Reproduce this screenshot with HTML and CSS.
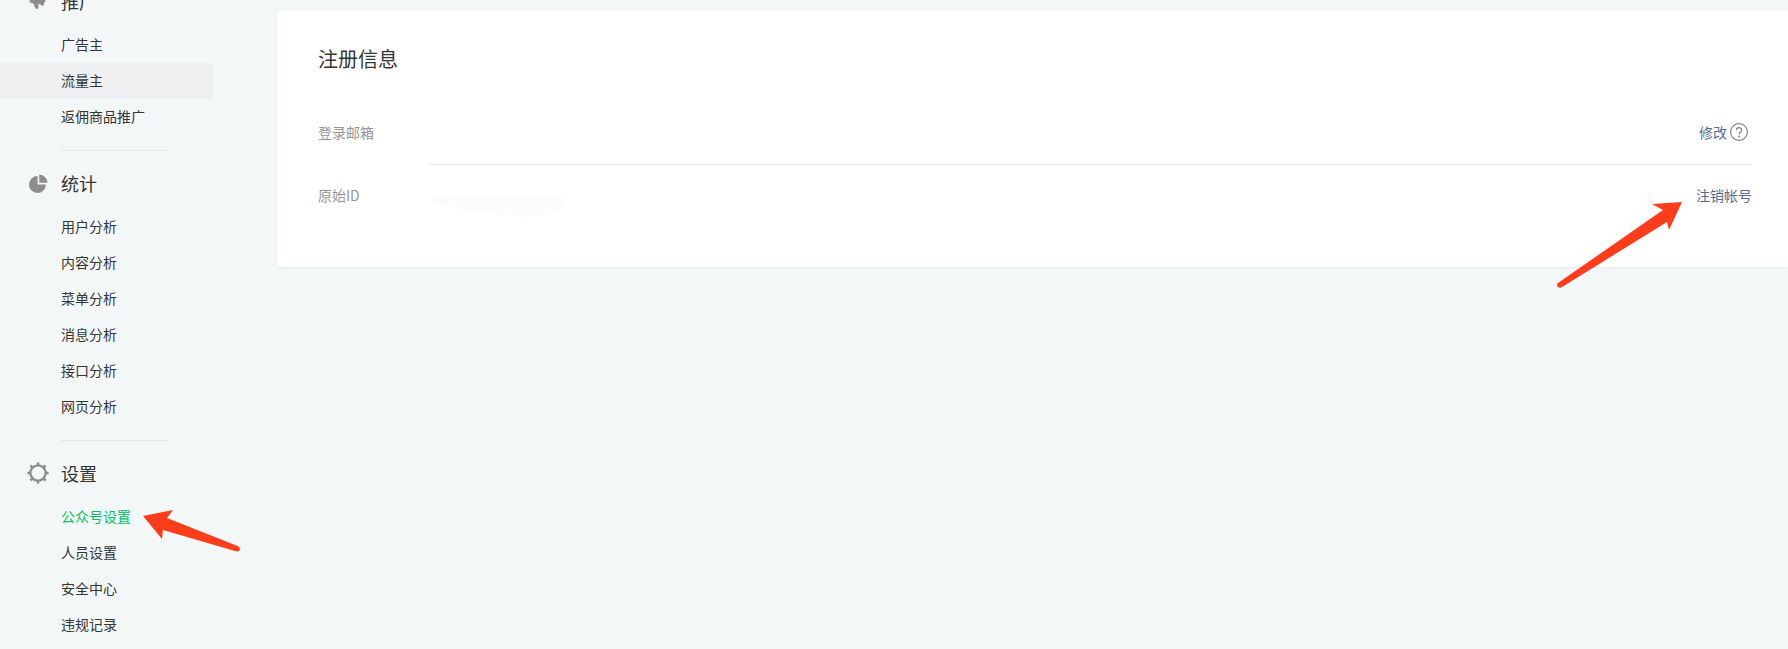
FILE: index.html
```html
<!DOCTYPE html>
<html lang="zh-CN">
<head>
<meta charset="utf-8">
<title>公众号设置</title>
<link rel="stylesheet" href="styles.css">
</head>
<body>
<div class="page">
  <aside class="sidebar">
    <section class="nav-group">
      <h2 class="nav-head">
        <svg class="nav-icon" viewBox="0 0 20 20"><path d="M0 4 L5 4 L8 2 L10 6 L15 0 L15 7 Q19 8.500 16 11.500 L15 15 L10 12 L10 17 Q9 18 7 17.500 L4.500 12 L1 11 Z" fill="#8d8d8d"/></svg>
        <span>推广</span>
      </h2>
      <ul class="nav-list">
        <li class="nav-item">广告主</li>
        <li class="nav-item nav-item-hover">流量主</li>
        <li class="nav-item">返佣商品推广</li>
      </ul>
    </section>
    <section class="nav-group">
      <h2 class="nav-head">
        <svg class="nav-icon" viewBox="0 0 20 20"><path d="M9 2.200 V11 H17.800 A8.900 8.900 0 1 1 9 2.200 Z" fill="#8d8d8d"/><path d="M10.800 0.600 A8.800 8.800 0 0 1 19.400 9.200 H10.800 Z" fill="#8d8d8d"/></svg>
        <span>统计</span>
      </h2>
      <ul class="nav-list">
        <li class="nav-item">用户分析</li>
        <li class="nav-item">内容分析</li>
        <li class="nav-item">菜单分析</li>
        <li class="nav-item">消息分析</li>
        <li class="nav-item">接口分析</li>
        <li class="nav-item">网页分析</li>
      </ul>
    </section>
    <section class="nav-group nav-group-last">
      <h2 class="nav-head">
        <svg class="nav-icon nav-icon-gear" viewBox="0 0 22 22"><circle cx="11" cy="11" r="7.600" fill="none" stroke="#8d8d8d" stroke-width="2.200"/><g stroke="#8d8d8d" stroke-width="2.600"><path d="M11 0.400 V4"/><path d="M11 18 V21.600"/><path d="M0.400 11 H4"/><path d="M18 11 H21.600"/><path d="M3.500 3.500 L6 6"/><path d="M16 16 L18.500 18.500"/><path d="M3.500 18.500 L6 16"/><path d="M16 6 L18.500 3.500"/></g></svg>
        <span>设置</span>
      </h2>
      <ul class="nav-list">
        <li class="nav-item nav-item-active">公众号设置</li>
        <li class="nav-item">人员设置</li>
        <li class="nav-item">安全中心</li>
        <li class="nav-item">违规记录</li>
      </ul>
    </section>
  </aside>
  <main class="main">
    <div class="card">
      <h1 class="card-title">注册信息</h1>
      <div class="row">
        <div class="row-label">登录邮箱</div>
        <div class="row-value">
          <span></span>
          <span class="row-action">
            <a class="link">修改</a>
            <svg class="help" viewBox="0 0 18 18"><circle cx="9" cy="9" r="8.400" fill="none" stroke="#808080" stroke-width="1.100"/><path d="M6.400 7 C6.400 3.900 11.700 3.900 11.700 7 C11.700 9 9 9 9 11.200" fill="none" stroke="#808080" stroke-width="1.200"/><circle cx="9" cy="13.400" r="0.900" fill="#808080"/></svg>
          </span>
        </div>
      </div>
      <div class="row">
        <div class="row-label">原始ID</div>
        <div class="row-value row-value-plain">
          <svg class="redact" viewBox="0 0 129 22"><path d="M0 0 H129 V11 Q128 20 112 21 L88 22 L45 17 L0 9 Z" fill="#fcfcfc"/></svg>
          <a class="link">注销帐号</a>
        </div>
      </div>
    </div>
  </main>
</div>
<svg class="arrows" viewBox="0 0 1788 649">
  <path d="M143 516 L173 510 L167 518 L237.500 546 Q241 548 239.500 550.500 Q238 552 235 551 L163 530 L162 539 Z" fill="#fc3d1c"/>
  <path d="M1682 202 L1652 204 L1663 210 L1558 283 Q1556 285.500 1558 287 Q1560 288.500 1562 287 L1667 222 L1669 230 Z" fill="#fc3d1c"/>
</svg>
</body>
</html>
```

FILE: styles.css
```css
* {
  box-sizing: border-box;
}

html,
body {
  margin: 0;
  height: 100%;
  overflow: hidden;
}

body {
  position: relative;
  background: #f4f7f8;
  color: #353535;
  font-family: "Noto Sans CJK SC", "Noto Sans", sans-serif;
  font-size: 14px;
}

.page {
  display: flex;
  align-items: flex-start;
}

.sidebar {
  flex: 0 0 213px;
  margin-top: -21px;
}

.nav-group {
  padding-bottom: 15px;
  position: relative;
}

.nav-group::after {
  content: "";
  display: block;
  height: 1px;
  margin: 15px 44px 0 61px;
  background: #e4e8eb;
}

.nav-group-last::after {
  display: none;
}

.nav-group + .nav-group {
  margin-top: -5px;
}

.nav-head {
  display: flex;
  align-items: center;
  height: 44px;
  margin: 0 0 4px;
  padding-left: 29px;
  font-size: 18px;
  font-weight: 400;
  color: #353535;
}

.nav-head span {
  margin-left: 13px;
}

.nav-icon {
  width: 19px;
  height: 19px;
  flex: none;
}

.nav-icon-gear {
  width: 22px;
  height: 22px;
  margin-left: -2px;
}

.nav-icon-gear + span {
  margin-left: 12px;
}

.nav-list {
  list-style: none;
  margin: 0;
  padding: 0;
}

.nav-item {
  height: 36px;
  line-height: 34px;
  padding-left: 61px;
  color: #353535;
}

.nav-item-hover {
  background: #edeff0;
}

.nav-item-active {
  color: #07c160;
}

.main {
  flex: 1;
  min-width: 0;
  padding: 10px 0 0 64px;
}

.card {
  height: 257px;
  padding: 35px 36px 40px 41px;
  background: #fff;
  border-radius: 3px 0 0 3px;
  box-shadow: 0 1px 2px rgba(150, 150, 150, 0.12);
}

.card-title {
  height: 28px;
  margin: 0 0 29px;
  font-size: 20px;
  font-weight: 400;
  line-height: 28px;
  color: #353535;
}

.row {
  display: flex;
}

.row-label {
  flex: 0 0 111px;
  height: 60px;
  line-height: 60px;
  color: #969696;
}

.row-value {
  flex: 1;
  display: flex;
  align-items: center;
  justify-content: space-between;
  height: 63px;
  padding-bottom: 2px;
  border-bottom: 1px solid #e4e8eb;
}

.row-value-plain {
  border-bottom: 0;
  padding-bottom: 3px;
  padding-left: 4px;
}

.row-action {
  display: flex;
  align-items: center;
  gap: 3px;
  margin-right: 4px;
}

.link {
  color: #576b95;
}

.help {
  width: 18px;
  height: 18px;
}

.redact {
  width: 129px;
  height: 22px;
  margin-top: 14px;
  margin-bottom: -8px;
}

.arrows {
  position: absolute;
  top: 0;
  left: 0;
  width: 1788px;
  height: 649px;
  pointer-events: none;
}
```
